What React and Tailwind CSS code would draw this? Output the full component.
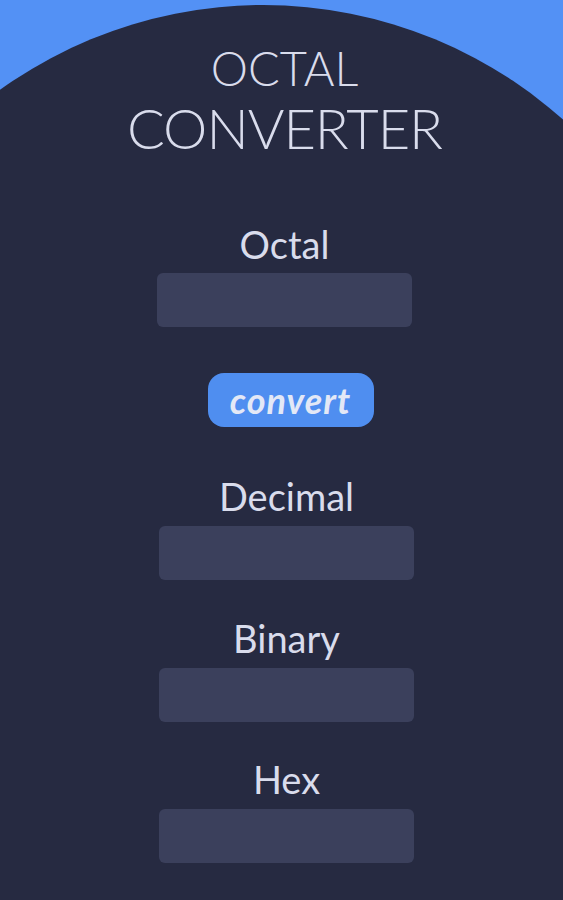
export default function App() {
  const outputs = [
    { label: "Decimal", mt: "mt-[49px]" },
    { label: "Binary", mt: "mt-[38px]" },
    { label: "Hex", mt: "mt-[37px]" },
  ];

  return (
    <div
      className="h-[900px] w-[563px] overflow-hidden bg-[#5391f5] pt-[5px] text-[#d9dcec]"
      style={{ fontFamily: "Lato, 'Open Sans', sans-serif" }}
    >
      {/* dark arch panel */}
      <div className="ml-[-187px] h-[895px] w-[900px] rounded-t-[450px] bg-[#262a41]">
        <div className="ml-[187px] flex w-[563px] flex-col items-center">
          {/* title */}
          <div className="flex flex-col items-center pl-[6px] pt-[36px]">
            <h1 className="h-[54px] text-[47px] font-light leading-[54px]">OCTAL</h1>
            <h2 className="h-[66px] text-[56px] font-light leading-[66px] tracking-[-1px]">
              CONVERTER
            </h2>
          </div>

          {/* input */}
          <div className="mt-[63px] flex flex-col items-center pl-[6px]">
            <label className="h-[40px] text-[38px] leading-[40px]">Octal</label>
            <input
              type="text"
              className="mt-[9px] h-[54px] w-[255px] rounded-[6px] bg-[#3b405c] px-3 text-[24px] outline-none"
            />
          </div>

          <button className="ml-[18px] mt-[46px] flex h-[54px] w-[166px] items-center justify-center rounded-[16px] bg-[#4f8ef0] text-[36px] font-bold italic tracking-[1px] text-[#e3e8f6]">
            convert
          </button>

          {outputs.map((o) => (
            <div key={o.label} className={`${o.mt} flex flex-col items-center pl-[10px]`}>
              <label className="h-[40px] text-[38px] leading-[40px]">{o.label}</label>
              <input
                type="text"
                readOnly
                className="mt-[10px] h-[54px] w-[255px] rounded-[6px] bg-[#3b405c] px-3 text-[24px] outline-none"
              />
            </div>
          ))}
        </div>
      </div>
    </div>
  );
}
